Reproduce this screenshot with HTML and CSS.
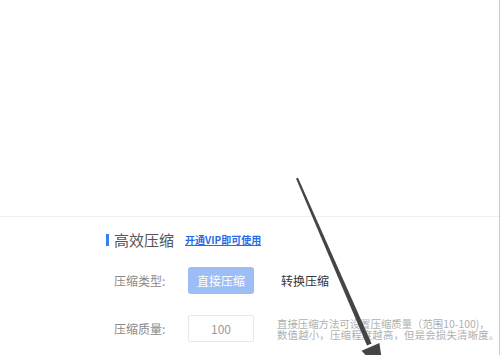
FILE: index.html
```html
<!DOCTYPE html>
<html>
<head>
    <meta charset="UTF-8">
    <title>高效压缩</title>
    <link rel="stylesheet" href="styles.css">
</head>
<body>
    <div class="page">
        <div class="main">
            <div class="preview"></div>
            <div class="settings">
                <div class="title">
                    <span class="bar"></span>
                    <span class="name">高效压缩</span>
                    <a href="javascript:;" class="vip">开通VIP即可使用</a>
                </div>
                <div class="row row_type">
                    <span class="label">压缩类型:</span>
                    <span class="btn on">直接压缩</span>
                    <span class="btn">转换压缩</span>
                </div>
                <div class="row row_quality">
                    <span class="label">压缩质量:</span>
                    <span class="input">100</span>
                    <p class="tip">直接压缩方法可设置压缩质量（范围10-100)，<br><span class="wide">数值越小，压缩程度越高，但是会损失清晰度。</span></p>
                </div>
            </div>
        </div>
        <div class="scroll"></div>
    </div>
    <svg class="arrow" width="500" height="355" viewBox="0 0 500 355">
        <polygon points="296,178.6 298,177.8 371.6,343.4 367,345.4" fill="#454545"/>
        <polygon points="361.6,350.8 379.4,343 384,375" fill="#454545"/>
    </svg>
</body>
</html>
```

FILE: styles.css
```css
* {
    margin: 0;
    padding: 0;
}
body {
    font-family: "Noto Sans CJK SC", "Noto Sans", sans-serif;
    background: #fff;
    overflow: hidden;
}
a {
    text-decoration: none;
}
.page {
    display: flex;
    width: 500px;
    height: 355px;
}
.main {
    flex: 1;
}
.preview {
    height: 216px;
    border-bottom: 1px solid #efefef;
}
.settings {
    padding-left: 106px;
}
.title {
    display: flex;
    align-items: center;
    height: 18px;
    margin-top: 14px;
}
.title .bar {
    width: 3px;
    height: 12px;
    background: #3b7cf2;
    margin-right: 5px;
}
.title .name {
    font-size: 15px;
    color: #555;
    line-height: 18px;
}
.title .vip {
    margin-left: 11px;
    font-size: 10px;
    font-weight: bold;
    color: #2a6ce8;
    text-decoration: underline;
    line-height: 14px;
}
.row {
    display: flex;
    align-items: center;
    padding-left: 8px;
    height: 27px;
}
.row_type {
    margin-top: 18px;
}
.row_quality {
    margin-top: 21px;
}
.label {
    width: 74px;
    font-size: 12px;
    color: #8a8a8a;
}
.btn {
    width: 66px;
    height: 27px;
    line-height: 27px;
    text-align: center;
    font-size: 12px;
    color: #333;
    border-radius: 3px;
}
.btn.on {
    background: #9dbdf6;
    color: #fff;
    margin-right: 18px;
}
.input {
    box-sizing: border-box;
    width: 66px;
    height: 27px;
    line-height: 25px;
    border: 1px solid #e8e8e8;
    border-radius: 2px;
    text-align: center;
    font-size: 12px;
    color: #999;
}
.tip {
    margin-left: 23px;
    font-size: 10.4px;
    line-height: 11px;
    color: #b0b0b0;
    white-space: nowrap;
}
.tip .wide {
    letter-spacing: 0.2px;
}
.scroll {
    width: 12px;
    background: #f7f7f7;
    border-right: 1px solid #c8c8c8;
}
.arrow {
    position: absolute;
    left: 0;
    top: 0;
    pointer-events: none;
}
```
